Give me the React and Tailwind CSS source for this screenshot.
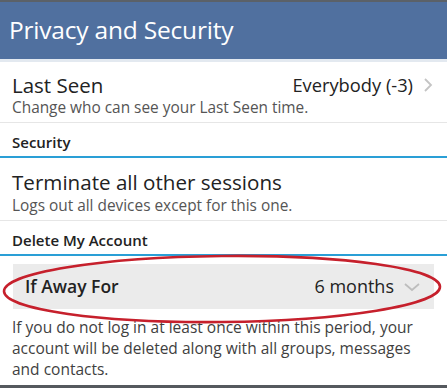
import React from 'react';

const font = { fontFamily: '"Open Sans", "Liberation Sans", sans-serif' };

const ChevronRight = () => (
  <svg width="10" height="16" viewBox="0 0 10 16" className="ml-[10px]">
    <path d="M2 2 L8 8 L2 14" fill="none" stroke="#c4c4c4" strokeWidth="1.8" />
  </svg>
);

const ChevronDown = () => (
  <svg width="16" height="10" viewBox="0 0 16 10" className="ml-[10px]">
    <path d="M1 2 L8 8 L15 2" fill="none" stroke="#bdbdbd" strokeWidth="1.8" />
  </svg>
);

const SectionHeader = ({ children }) => (
  <div className="h-[35px] flex items-end pb-[6px] px-[12px] border-b-2 border-[#2a9fd6]">
    <span className="text-[15px] font-semibold text-[#222] leading-none">{children}</span>
  </div>
);

export default function App() {
  return (
    <div className="relative w-[447px] h-[388px] bg-white overflow-hidden" style={font}>
      {/* Title bar */}
      <div className="h-[59px] bg-[#50709f] border-t-2 border-[#5b6168] flex items-center px-[9px]">
        <h1 className="text-[24.5px] text-white leading-none tracking-[-0.2px]">Privacy and Security</h1>
      </div>
      <div className="h-[3px] bg-[#e3e9f0]" />

      {/* Last Seen */}
      <div className="h-[61px] px-[12px] pt-[10px] border-b border-[#e6e6e6]">
        <div className="flex items-center justify-between">
          <span className="text-[20.5px] text-[#222] leading-[26px]">Last Seen</span>
          <div className="flex items-center pr-[2px]">
            <span className="text-[18.3px] text-[#222] leading-[26px]">Everybody (-3)</span>
            <ChevronRight />
          </div>
        </div>
        <p className="text-[15.4px] text-[#555] leading-[20px]">Change who can see your Last Seen time.</p>
      </div>

      <SectionHeader>Security</SectionHeader>

      {/* Terminate sessions */}
      <div className="h-[63px] px-[12px] pt-[11px] border-b border-[#e6e6e6]">
        <p className="text-[20.6px] text-[#222] leading-[27px]">Terminate all other sessions</p>
        <p className="text-[15.4px] text-[#555] leading-[20px]">Logs out all devices except for this one.</p>
      </div>

      <SectionHeader>Delete My Account</SectionHeader>

      {/* If Away For */}
      <div className="mx-[13px] mt-[8px] h-[45px] bg-[#ebebeb] flex items-center justify-between pl-[12px] pr-[14px]">
        <span className="text-[17.5px] font-semibold text-[#222]">If Away For</span>
        <div className="flex items-center">
          <span className="text-[18px] text-[#222]">6 months</span>
          <ChevronDown />
        </div>
      </div>

      <p className="px-[12px] pt-[8px] text-[15.5px] text-[#3f3f3f] leading-[21px]">
        If you do not log in at least once within this period, your account will be deleted along with all groups, messages and contacts.
      </p>

      <div className="absolute left-0 right-0 bottom-0 h-[3px] bg-[#55595e]" />

      {/* red annotation ellipse */}
      <svg className="absolute left-0 top-0 pointer-events-none" width="447" height="388">
        <ellipse cx="222" cy="289" rx="218" ry="33" fill="none" stroke="#c6202c" strokeWidth="2.6" transform="rotate(-0.6 222 289)" />
      </svg>
    </div>
  );
}
